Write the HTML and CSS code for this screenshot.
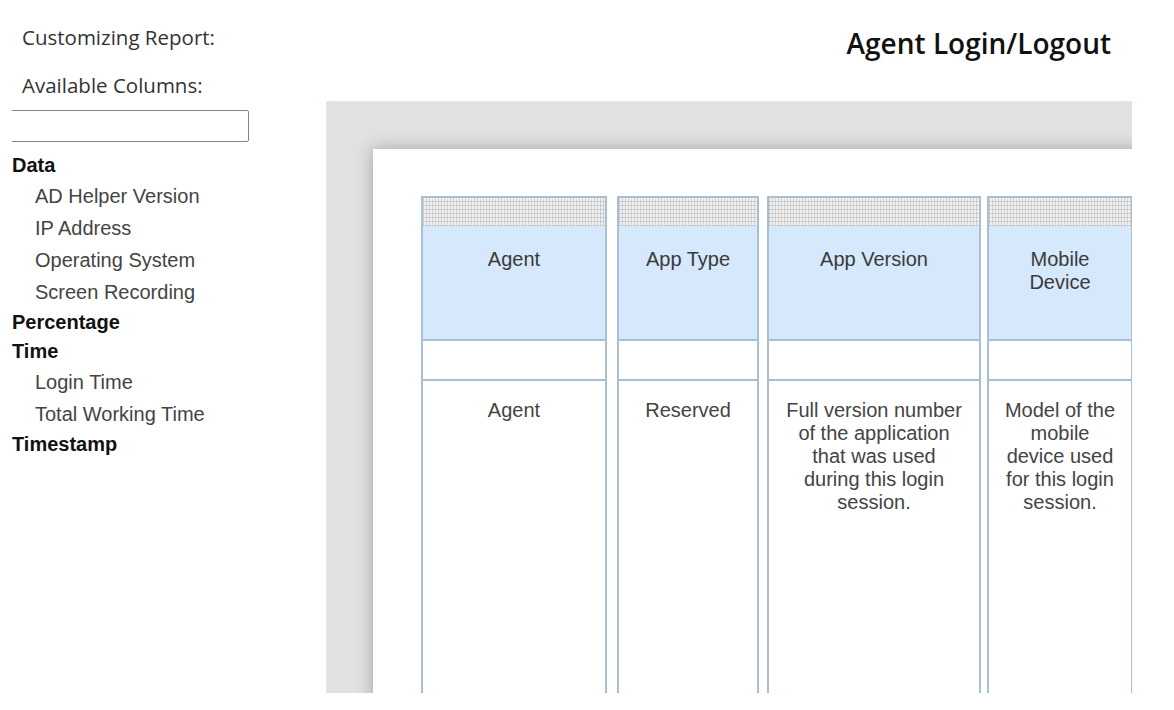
FILE: index.html
```html
<!DOCTYPE html>
<html>
<head>
<meta charset="utf-8">
<title>Agent Login/Logout</title>
<link rel="stylesheet" href="styles.css">
</head>
<body>
<div class="page">
  <aside class="sidebar">
    <p class="label label-first">Customizing Report:</p>
    <p class="label">Available Columns:</p>
    <div class="search-wrap"><input class="search" type="text"></div>
    <ul class="tree">
      <li class="group">Data</li>
      <li class="item">AD Helper Version</li>
      <li class="item">IP Address</li>
      <li class="item">Operating System</li>
      <li class="item">Screen Recording</li>
      <li class="group">Percentage</li>
      <li class="group">Time</li>
      <li class="item">Login Time</li>
      <li class="item">Total Working Time</li>
      <li class="group">Timestamp</li>
    </ul>
  </aside>
  <main class="main">
    <h1 class="title">Agent Login/Logout</h1>
    <div class="canvas">
      <div class="paper">
        <div class="col col-agent">
          <div class="pattern"></div>
          <div class="head">Agent</div>
          <div class="blank"></div>
          <div class="desc">Agent</div>
        </div>
        <div class="col col-type">
          <div class="pattern"></div>
          <div class="head">App Type</div>
          <div class="blank"></div>
          <div class="desc">Reserved</div>
        </div>
        <div class="col col-version">
          <div class="pattern"></div>
          <div class="head">App Version</div>
          <div class="blank"></div>
          <div class="desc">Full version number of the application that was used during this login session.</div>
        </div>
        <div class="col col-mobile">
          <div class="pattern"></div>
          <div class="head">Mobile Device</div>
          <div class="blank"></div>
          <div class="desc">Model of the mobile device used for this login session.</div>
        </div>
      </div>
    </div>
  </main>
</div>
</body>
</html>
```

FILE: styles.css
```css
html, body {
  margin: 0;
  padding: 0;
  background: #ffffff;
}

.page {
  display: flex;
  align-items: flex-start;
  width: 1174px;
  height: 710px;
  overflow: hidden;
}

.sidebar {
  width: 326px;
  flex-shrink: 0;
}

.label {
  margin: 20px 0 0 22px;
  font-family: "Open Sans", "Noto Sans", sans-serif;
  font-size: 20.5px;
  line-height: 28px;
  color: #333333;
}

.label-first {
  margin-top: 23px;
}

.search-wrap {
  margin: 11px 0 0 12px;
  width: 237px;
  height: 32px;
  overflow: hidden;
}

.search {
  display: block;
  box-sizing: border-box;
  margin: 0 0 0 -10px;
  width: 247px;
  height: 32px;
  border: 1px solid #858585;
  border-radius: 2px;
  background: #ffffff;
  padding: 0;
}

.tree {
  list-style: none;
  margin: 9px 0 0 0;
  padding: 0;
  font-family: "Liberation Sans", Arial, sans-serif;
  font-size: 20px;
}

.group {
  padding-left: 12px;
  line-height: 29px;
  font-weight: bold;
  color: #111111;
}

.item {
  padding-left: 35px;
  line-height: 32px;
  color: #444444;
}

.main {
  width: 806px;
  flex-shrink: 0;
  display: flex;
  flex-direction: column;
}

.title {
  box-sizing: border-box;
  height: 101px;
  margin: 0;
  padding: 23px 21px 0 0;
  text-align: right;
  font-family: "Open Sans", "Noto Sans", sans-serif;
  font-weight: 600;
  font-size: 28px;
  line-height: 40px;
  color: #111111;
}

.canvas {
  box-sizing: border-box;
  height: 592px;
  background: #e1e1e1;
  border-top: 1px solid #dde8f4;
  border-left: 1px solid #dde8f4;
  overflow: hidden;
  padding: 47px 0 0 46px;
}

.paper {
  display: flex;
  align-items: flex-start;
  width: 900px;
  height: 700px;
  background: #ffffff;
  box-shadow: 0 0 16px rgba(0, 0, 0, 0.28);
  padding: 47px 0 0 48px;
  box-sizing: border-box;
}

.col {
  box-sizing: border-box;
  flex-shrink: 0;
  height: 620px;
  border: 2px solid #a7c0d4;
  font-family: "Liberation Sans", Arial, sans-serif;
  font-size: 20px;
  line-height: 23px;
  color: #3a3a3a;
  text-align: center;
}

.col-agent { width: 186px; margin-right: 10px; }
.col-type { width: 142px; margin-right: 8px; }
.col-version { width: 214px; margin-right: 6px; }
.col-mobile { width: 146px; }

.pattern {
  height: 28px;
  background-color: #f1f1f1;
  background-image:
    repeating-linear-gradient(90deg, rgba(170, 170, 170, 0.45) 0 1px, transparent 1px 3px),
    repeating-linear-gradient(0deg, rgba(170, 170, 170, 0.45) 0 1px, transparent 1px 4px);
}

.head {
  box-sizing: border-box;
  height: 115px;
  padding: 22px 14px 0;
  background: #d6e8fb;
  border-bottom: 2px solid #a7c0d4;
}

.blank {
  box-sizing: border-box;
  height: 40px;
  border-bottom: 2px solid #a7c0d4;
}

.desc {
  padding: 18px 14px 0;
  color: #444444;
}
```
